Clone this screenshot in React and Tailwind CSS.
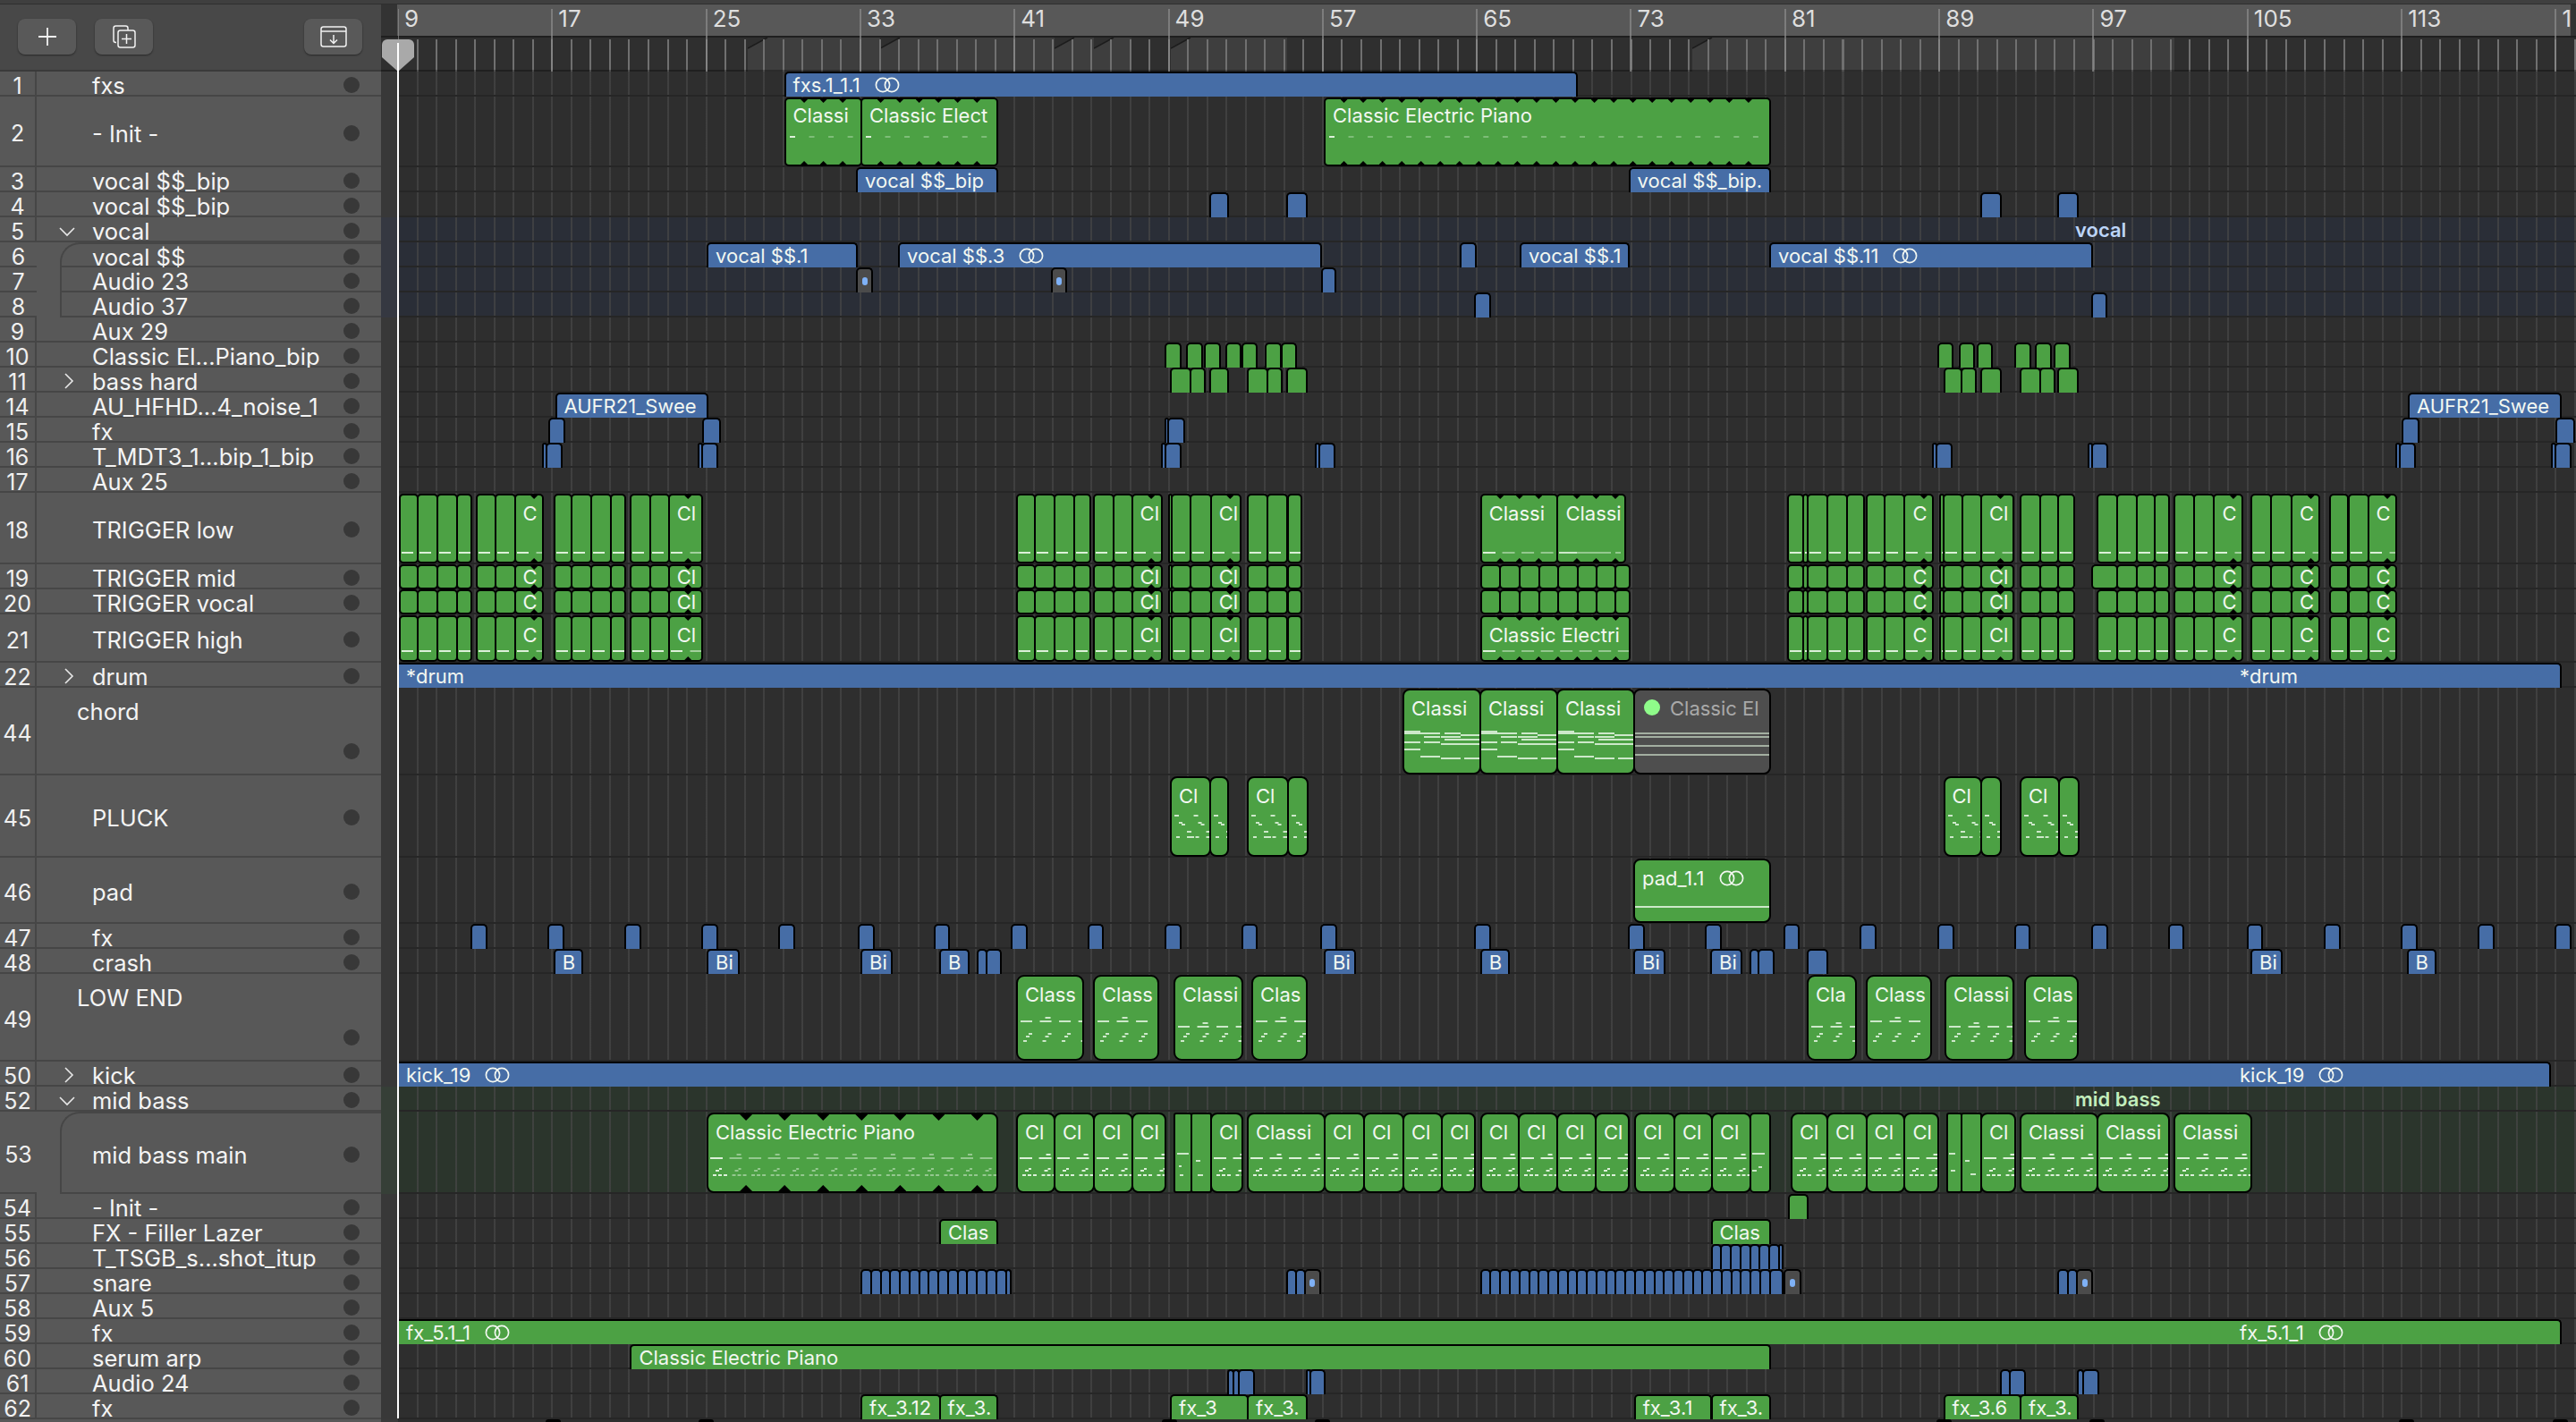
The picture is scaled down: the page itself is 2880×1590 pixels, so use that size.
import React from "react";

const BAR = 21.54;
const X0 = 445;

// clip helpers
const c = (x1, x2, color, extra = {}) => ({ x1, x2, color, ...extra });
const strips = (from, to, step, color = "blue") => {
  const out = [];
  for (let x = from; x + step < to - 4; x += step) out.push(c(x, x + step, color));
  const last = out.length ? out[out.length - 1].x2 : from;
  out.push(c(last, to, color));
  return out;
};
const chain = (xs, color = "green", extra = {}) =>
  xs.slice(0, -1).map((x, i) => c(x, xs[i + 1], color, extra));

// midi note helpers: [x, y, width, opacity]
const dashes = (w, y, len, off = 1, step = BAR, dim = 1) => {
  const out = [];
  let i = 0;
  for (let x = off; x + 2 < w; x += step) {
    out.push([x, y, len, i === 0 ? 1 : dim]);
    i++;
  }
  return out;
};
const chordNotes = [
  [0, 45, 18], [0, 47, 18], [0, 57, 18], [0, 65, 18],
  [18, 47, 22], [22, 51, 18], [22, 57, 18], [18, 73, 22],
  [45, 47, 18], [41, 51, 22], [41, 59, 22], [45, 54, 18], [41, 75, 22],
  [63, 49, 23], [63, 54, 23], [63, 59, 23], [67, 75, 19],
];
const lowNotes = (w, dy = 0) => {
  const out = [];
  for (let x = 3, i = 0; x + 6 < w; x += BAR, i++) {
    out.push([x, 49 + dy, 13]);
    if (i % 2 === 1) out.push([x + 6, 45 + dy, 6]);
    out.push([x + 3, 71, 4], [x + 6, 66, 4], [x + 9, 63, 4]);
  }
  return out;
};
const bassNotes = (w, dim = 1) => {
  const out = [];
  for (let x = 2, i = 0; x + 4 < w; x += BAR, i++) {
    const o = i === 0 ? 1 : dim;
    out.push([x, 48, 14, o], [x + 3, 67, 4, o], [x + 9, 67, 4, o], [x + 15, 67, 4, o], [x + 6, 62, 4, o], [x + 10, 60, 3, o]);
    if (i % 2 === 1) out.push([x + 8, 44, 5, o]);
  }
  return out;
};
const pluckNotes = (w) => {
  const out = [];
  for (let x = 3, i = 0; x + 3 < w; x += BAR, i++) {
    out.push([x, 41, 5], [x + 5, 49, 4], [x + 8, 51, 4], [x + 14, 59, 5], [x + 2, 65, 4], [x + 14, 65, 8]);
  }
  return out;
};

// trigger block, the last entry of a group may be the text of its last clip
const trigGroups = [
  [447, 466.6, 488.7, 510.7, 526.6],
  [533.4, 553.6, 575.6, 607.5, "C"],
  [619.7, 639, 661, 682.8, 698.7],
  [705.4, 727, 747.7, 785, "Cl"],
  [1137, 1156.6, 1178.6, 1200.7, 1219],
  [1223.3, 1244.8, 1265.6, 1298.6, "Cl"],
  [1307, 1309.7, 1331, 1353.8, 1387.4, "Cl"],
  [1395.4, 1417.4, 1439.5, 1455.4],
  [1999, 2016, 2021, 2043, 2065, 2083.5],
  [2087, 2107.4, 2129.4, 2160.7, "C"],
  [2169, 2173, 2193.7, 2215, 2251.3, "Cl"],
  [2259, 2281.3, 2301, 2319],
  [2345, 2367, 2389, 2409, 2425],
  [2431.3, 2453.4, 2475.4, 2506.6, "C"],
  [2517, 2539, 2562, 2593, "C"],
  [2604.6, 2625.5, 2647.5, 2678.7, "C"],
];

const trigger = (y, kind, showLabel = true, firstX = null) => {
  const out = [];
  trigGroups.forEach((g) => {
    const label = typeof g[g.length - 1] === "string" ? g[g.length - 1] : null;
    const xs = g.filter((v) => typeof v === "number");
    if (firstX && xs[0] === 2345) xs[0] = firstX;
    xs.slice(0, -1).forEach((x, i) => {
      const x2 = xs[i + 1];
      const isLast = i === xs.length - 2;
      out.push(
        c(x, x2, "green", {
          kind,
          radius: "rounded-[5px]",
          label: showLabel && label && isLast ? label : null,
          notchEvery: label && isLast ? BAR : null,
          notes: y ? dashes(x2 - x, y, 13, 1, BAR, label && isLast ? 0.6 : 1) : null,
        })
      );
    });
  });
  return out;
};

const midBlock = (kind) =>
  chain([1655.7, 1677, 1699, 1721, 1742, 1764, 1785, 1806, 1821.6], "green", { kind, radius: "rounded-[5px]" });

const small47 = [527, 613, 699, 785, 871, 960, 1044.5, 1131, 1216.6, 1303, 1388.7, 1477, 1649, 1821, 1907, 1994.7, 2080.4, 2167, 2252.5, 2339, 2424.6, 2512.8, 2599, 2685, 2771, 2857];

const grayDot = (x1, x2) => c(x1, x2, "gray", { dot: true });

const tall8 = "rounded-[8px]";
const midB = (x1, x2, label, dim = 1) =>
  c(x1, x2, "green", { kind: "tall", radius: tall8, label, notes: bassNotes(x2 - x1, dim) });

const tracks = [
  { n: "1", name: "fxs", h: "h-7", clips: [c(877.5, 1763, "blue", { label: "fxs.1_1.1", loop: true })] },
  {
    n: "2", name: "- Init -", h: "h-[79px]",
    clips: [
      c(877.5, 963, "green", { kind: "tall", high: true, radius: "rounded-[5px]", label: "Classi", notchEvery: BAR, notes: dashes(85, 41, 6, 4, BAR, 0.35) }),
      c(963, 1115, "green", { kind: "tall", high: true, radius: "rounded-[5px]", label: "Classic Elect", notchEvery: BAR, notes: dashes(152, 41, 6, 4, BAR, 0.35) }),
      c(1481, 1979, "green", { kind: "tall", high: true, radius: "rounded-[5px]", label: "Classic Electric Piano", notchEvery: BAR, notes: dashes(498, 41, 6, 4, BAR, 0.35) }),
    ],
  },
  {
    n: "3", name: "vocal $$_bip", h: "h-7",
    clips: [c(958, 1115, "blue", { label: "vocal $$_bip" }), c(1821.6, 1979, "blue", { label: "vocal $$_bip." })],
  },
  {
    n: "4", name: "vocal $$_bip", h: "h-7",
    clips: [c(1352.5, 1373, "blue"), c(1439, 1461, "blue"), c(2215, 2237, "blue"), c(2301, 2323, "blue")],
  },
  { n: "5", name: "vocal", h: "h-7", chevron: "down", tint: "vocal", tag: "vocal", clips: [] },
  {
    n: "6", name: "vocal $$", h: "h-7", tint: "vocal", inset: "first",
    clips: [
      c(791, 958, "blue", { label: "vocal $$.1" }),
      c(1005, 1477, "blue", { label: "vocal $$.3", loop: true }),
      c(1633, 1649.5, "blue"),
      c(1700, 1821, "blue", { label: "vocal $$.1" }),
      c(1979, 2339, "blue", { label: "vocal $$.11", loop: true }),
    ],
  },
  {
    n: "7", name: "Audio 23", h: "h-7", tint: "vocal", inset: "rest",
    clips: [grayDot(958, 975), grayDot(1175.5, 1191.5), c(1477.5, 1493, "blue")],
  },
  {
    n: "8", name: "Audio 37", h: "h-7", tint: "vocal", inset: "rest",
    clips: [c(1649, 1665.5, "blue"), c(2339, 2355, "blue")],
  },
  { n: "9", name: "Aux 29", h: "h-7", clips: [] },
  {
    n: "10", name: "Classic El...Piano_bip", h: "h-7",
    clips: [
      [1303, 1319.5], [1327, 1344], [1347, 1363.6], [1371, 1387], [1389, 1405], [1415, 1431.5], [1433, 1449],
      [2167, 2183], [2191, 2207], [2211, 2227], [2253, 2270], [2276, 2293], [2297, 2314],
    ].map(([a, b]) => c(a, b, "green")),
  },
  {
    n: "11", name: "bass hard", h: "h-7", chevron: "right",
    clips: [
      [1309, 1331], [1331, 1347], [1352.5, 1373], [1395, 1417], [1417, 1433], [1439, 1461],
      [2173.5, 2193], [2193, 2209], [2215, 2237], [2259, 2281], [2281, 2297], [2301, 2323],
    ].map(([a, b]) => c(a, b, "green")),
  },
  {
    n: "14", name: "AU_HFHD...4_noise_1", h: "h-7",
    clips: [c(621.5, 791, "blue", { label: "AUFR21_Swee" }), c(2693, 2863, "blue", { label: "AUFR21_Swee" })],
  },
  {
    n: "15", name: "fx", h: "h-7",
    clips: [[613.6, 631], [785.7, 805], [1303, 1306], [1306, 1324], [2685.5, 2704], [2857.5, 2878]].map(([a, b]) => c(a, b, "blue")),
  },
  {
    n: "16", name: "T_MDT3_1...bip_1_bip", h: "h-7",
    clips: [607, 781, 1298.6, 1470.7, 2160.7, 2334.6, 2679, 2853].flatMap((x) => [c(x, x + 4, "blue"), c(x + 4, x + 21, "blue")]),
  },
  { n: "17", name: "Aux 25", h: "h-7", clips: [] },
  {
    n: "18", name: "TRIGGER low", h: "h-20",
    clips: [
      ...trigger(63, "tall"),
      c(1655.7, 1741.4, "green", { kind: "tall", radius: "rounded-[5px]", label: "Classi", notchEvery: BAR, notes: dashes(85, 63, 14, 1, BAR, 0.5) }),
      c(1741.4, 1816.7, "green", { kind: "tall", radius: "rounded-[5px]", label: "Classi", notchEvery: BAR, notes: [[1, 63, 20], [21, 63, 38, 0.5], [64, 63, 6, 0.5]] }),
    ],
  },
  { n: "19", name: "TRIGGER mid", h: "h-7", clips: [...trigger(null, "mid", true, 2339), ...midBlock("mid")] },
  { n: "20", name: "TRIGGER vocal", h: "h-7", clips: [...trigger(null, "mid"), ...midBlock("mid")] },
  {
    n: "21", name: "TRIGGER high", h: "h-[54px]",
    clips: [
      ...trigger(37, "tall"),
      c(1655.7, 1821.6, "green", { kind: "tall", radius: "rounded-[5px]", label: "Classic Electri", notchEvery: BAR, notes: dashes(165, 37, 14, 1, BAR, 0.5) }),
    ],
  },
  {
    n: "22", name: "drum", h: "h-7", chevron: "right",
    clips: [c(447, 2863, "blue", { label: "*drum", again: 2505, flat: true })],
  },
  {
    n: "44", name: "chord", h: "h-[98px]", stack: true,
    clips: [
      c(1569, 1655, "green", { kind: "tall", radius: tall8, label: "Classi", notes: chordNotes }),
      c(1655, 1741, "green", { kind: "tall", radius: tall8, label: "Classi", notes: chordNotes }),
      c(1741, 1827, "green", { kind: "tall", radius: tall8, label: "Classi", notes: chordNotes }),
      c(1827, 1979, "darkgray", {
        kind: "tall", radius: tall8, label: "Classic El", muted: true,
        notes: [[0, 47, 150, 0.6], [0, 51, 150, 0.6], [0, 61, 150, 0.6], [0, 71, 150, 0.6]],
      }),
    ],
  },
  {
    n: "45", name: "PLUCK", h: "h-[92px]",
    clips: [
      [1309, 1353, "Cl"], [1353, 1373, null], [1395, 1439.5, "Cl"], [1439.5, 1461.5, null],
      [2173.5, 2215, "Cl"], [2215, 2237, null], [2259, 2301.5, "Cl"], [2301.5, 2323.5, null],
    ].map(([a, b, l]) => c(a, b, "green", { kind: "tall", radius: tall8, label: l, notes: pluckNotes(b - a) })),
  },
  {
    n: "46", name: "pad", h: "h-[74px]",
    clips: [c(1827, 1979, "green", { kind: "tall", radius: tall8, label: "pad_1.1", loop: true, notes: [[0, 51, 150]] })],
  },
  { n: "47", name: "fx", h: "h-7", clips: small47.map((x) => c(x, x + 16.5, "blue")) },
  {
    n: "48", name: "crash", h: "h-7",
    clips: [
      [619.7, 651, "B"], [791, 825.5, "Bi"], [963, 996.7, "Bi"], [1051, 1083, "B"], [1093, 1103, null], [1103, 1119, null],
      [1481, 1515, "Bi"], [1655.7, 1687.5, "B"], [1827, 1861, "Bi"], [1913, 1947, "Bi"], [1957.4, 1966, null], [1966, 1983, null],
      [2021, 2043, null], [2517, 2551, "Bi"], [2691.6, 2723, "B"],
    ].map(([a, b, l]) => c(a, b, "blue", { label: l })),
  },
  {
    n: "49", name: "LOW END", h: "h-[98px]", stack: true,
    clips: [
      [1137, 1211, "Class", 0], [1223, 1295, "Class", 0], [1313, 1389, "Classi", 6], [1400, 1461, "Clas", 0],
      [2021, 2075, "Cla", 6], [2087, 2159, "Class", 0], [2175, 2251, "Classi", 6], [2263.5, 2323, "Clas", 0],
    ].map(([a, b, l, d]) => c(a, b, "green", { kind: "tall", radius: "rounded-[9px]", label: l, notes: lowNotes(b - a, d) })),
  },
  {
    n: "50", name: "kick", h: "h-7", chevron: "right",
    clips: [c(447, 2851, "blue", { label: "kick_19", loop: true, again: 2505, flat: true })],
  },
  { n: "52", name: "mid bass", h: "h-7", chevron: "down", tint: "bass", tag: "mid bass", clips: [] },
  {
    n: "53", name: "mid bass main", h: "h-[92px]", tint: "bass", inset: "first",
    clips: [
      c(791, 1115, "green", { kind: "tall", radius: tall8, label: "Classic Electric Piano", notchEvery: BAR * 2, big: true, notes: bassNotes(324, 0.5) }),
      midB(1137, 1179, "Cl"), midB(1179, 1223, "Cl"), midB(1223, 1265.5, "Cl"), midB(1265.5, 1303, "Cl"),
      c(1313, 1332, "green", { kind: "tall", radius: "rounded-[3px]", notes: [[2, 43, 13], [5, 67, 4], [4, 57, 3]] }),
      c(1332, 1354, "green", { kind: "tall", radius: "rounded-[3px]", notes: [[4, 51, 5], [6, 67, 6]] }),
      midB(1354, 1389, "Cl"), midB(1395, 1481, "Classi"),
      midB(1481, 1525, "Cl"), midB(1525, 1569, "Cl"), midB(1569, 1612, "Cl"), midB(1612, 1649, "Cl"),
      midB(1655.7, 1698, "Cl"), midB(1698, 1741, "Cl"), midB(1741, 1784, "Cl"), midB(1784, 1821, "Cl"),
      midB(1828, 1872, "Cl"), midB(1872, 1914, "Cl"), midB(1914, 1957, "Cl"),
      c(1957, 1979, "green", { kind: "tall", radius: "rounded-[5px]", notes: [[1, 43, 14], [1, 62, 5], [8, 58, 4]] }),
      midB(2003, 2043, "Cl"), midB(2043, 2086.6, "Cl"), midB(2086.6, 2129.4, "Cl"), midB(2129.4, 2167.4, "Cl"),
      c(2177, 2193, "green", { kind: "tall", radius: "rounded-[3px]", notes: [[1, 43, 7], [3, 62, 5]] }),
      c(2193, 2215, "green", { kind: "tall", radius: "rounded-[3px]", notes: [[3, 51, 5], [9, 66, 6]] }),
      midB(2215, 2253, "Cl"), midB(2259, 2345, "Classi"), midB(2345, 2425, "Classi"), midB(2431, 2517, "Classi"),
    ],
  },
  { n: "54", name: "- Init -", h: "h-7", clips: [c(1999.6, 2021, "green")] },
  {
    n: "55", name: "FX - Filler Lazer", h: "h-7",
    clips: [c(1051, 1115, "green", { label: "Clas" }), c(1913.5, 1979, "green", { label: "Clas" })],
  },
  { n: "56", name: "T_TSGB_s...shot_itup", h: "h-7", clips: strips(1913.5, 1993.5, 10.77) },
  {
    n: "57", name: "snare", h: "h-7",
    clips: [
      ...strips(963, 1129.6, 10.77),
      c(1439, 1449, "blue"), c(1449, 1459, "blue"), grayDot(1459, 1475.6),
      ...strips(1655.7, 1993.5, 10.77), grayDot(1994.7, 2013),
      c(2301, 2312, "blue"), c(2312, 2322, "blue"), grayDot(2322, 2339),
    ],
  },
  { n: "58", name: "Aux 5", h: "h-7", clips: [] },
  {
    n: "59", name: "fx", h: "h-7",
    clips: [c(447, 2863, "green", { label: "fx_5.1_1", loop: true, again: 2505, flat: true })],
  },
  { n: "60", name: "serum arp", h: "h-7", clips: [c(705.4, 1979, "green", { label: "Classic Electric Piano" })] },
  {
    n: "61", name: "Audio 24", h: "h-7",
    clips: [[1373, 1379], [1379, 1385], [1385, 1401.5], [1461, 1465], [1465, 1481], [2237, 2247], [2247, 2263.5], [2323, 2329], [2329, 2345.6]].map(([a, b]) => c(a, b, "blue")),
  },
  {
    n: "62", name: "fx", h: "h-7",
    clips: [
      [963, 1050.6, "fx_3.12"], [1050.6, 1115, "fx_3."], [1309, 1395, "fx_3"], [1395, 1461, "fx_3."],
      [1827.7, 1913.5, "fx_3.1"], [1913.5, 1979, "fx_3."], [2173.5, 2259, "fx_3.6"], [2259, 2323, "fx_3."],
    ].map(([a, b, l]) => c(a, b, "green", { label: l })),
  },
];

const markerBands = [
  [836, 984], [984, 1179], [1179, 1223], [1223, 1265], [1309, 1439], [1892, 2431],
];
const rulerBars = [9, 17, 25, 33, 41, 49, 57, 65, 73, 81, 89, 97, 105, 113, 121];
const barX = (b) => (b - 9) * BAR;

function LoopIcon() {
  return (
    <svg width="28" height="18" viewBox="0 0 28 18" fill="none" stroke="currentColor" strokeWidth="1.7" className="shrink-0">
      <circle cx="9" cy="9" r="7.6" />
      <circle cx="19" cy="9" r="7.6" />
    </svg>
  );
}

function ClipLabel({ text, loop, left, tall, high, muted }) {
  let place = "top-0 bottom-0";
  if (tall) place = high ? "top-[7px]" : "top-[9px]";
  return (
    <div
      className={`absolute flex items-center gap-[16px] whitespace-nowrap text-[22px] leading-none ${place} ${muted ? "text-[#a9a9a9]" : "text-[#f2f7f1]"}`}
      style={{ left }}
    >
      <span>{text}</span>
      {loop && <LoopIcon />}
    </div>
  );
}

function Clip({ x1, x2, color, label, loop, again, kind, high, radius, notes, notchEvery, big, dot, flat, muted }) {
  const w = x2 - x1;
  const fill = {
    blue: "bg-[#466da6]",
    green: "bg-[#4ca144]",
    gray: "bg-[#4b4b4b]",
    darkgray: "bg-[#4e4e4e]",
  }[color];
  let shape = "top-0 bottom-0 border-x-2 border-t-2 rounded-t-[5px]";
  if (kind === "tall") shape = `top-[1px] bottom-[1px] border-2 ${radius}`;
  if (kind === "mid") shape = "top-0 bottom-0 border-2 rounded-[5px]";
  if (flat) shape = "top-0 bottom-0 border-t-2 border-r-2 rounded-tr-[5px]";

  const notches = [];
  if (notchEvery) for (let p = notchEvery; p < w - 6; p += notchEvery) notches.push(p);
  const notchSize = big ? 14 : 8;

  // neighbours share their black edge, so each clip reaches 1px past its bounds
  return (
    <div className={`absolute overflow-hidden border-black ${fill} ${shape}`} style={{ left: x1 - X0 - 1, width: w + 2 }}>
      {notes && (
        <svg className="absolute inset-0 h-full w-full">
          {notes.map((n, i) => (
            <rect key={i} x={n[0]} y={n[1]} width={n[2]} height="2" fill="#dcf0d9" opacity={n[3] ?? 0.9} />
          ))}
        </svg>
      )}
      {notches.map((p) => (
        <React.Fragment key={p}>
          <span
            className={`absolute top-0 bg-black [clip-path:polygon(0_0,100%_0,50%_100%)] ${big ? "h-[7px] w-[14px]" : "h-[4px] w-[8px]"}`}
            style={{ left: p - notchSize / 2 - 1 }}
          />
          <span
            className={`absolute bottom-0 bg-black [clip-path:polygon(50%_0,100%_100%,0_100%)] ${big ? "h-[7px] w-[14px]" : "h-[4px] w-[8px]"}`}
            style={{ left: p - notchSize / 2 - 1 }}
          />
        </React.Fragment>
      ))}
      {muted && <span className="absolute left-[10px] top-[10px] h-[18px] w-[18px] rounded-full bg-[#8ffb8a]" />}
      {label && <ClipLabel text={label} loop={loop} left={muted ? 39 : 8} tall={kind === "tall"} high={high} muted={muted} />}
      {again && <ClipLabel text={label} loop={loop} left={again - x1} tall={false} />}
      {dot && (
        <div className="absolute inset-0 flex items-center justify-center">
          <span className="h-[9px] w-[6px] rounded-full bg-[#7fb1f6]" />
        </div>
      )}
    </div>
  );
}

function Chevron({ dir }) {
  if (dir === "down") {
    return (
      <svg width="20" height="12" viewBox="0 0 20 12" fill="none" stroke="#e8e8e8" strokeWidth="1.6" className="absolute left-[65px] top-[10px]">
        <path d="M2 2l8 8 8-8" />
      </svg>
    );
  }
  return (
    <svg width="12" height="20" viewBox="0 0 12 20" fill="none" stroke="#e8e8e8" strokeWidth="1.6" className="absolute left-[71px] top-[5px]">
      <path d="M2 2l8 8-8 8" />
    </svg>
  );
}

function TrackHead({ t }) {
  const nameRow = (
    <>
      <div className={`min-w-0 flex-1 whitespace-nowrap text-[25.5px] leading-none text-[#f4f4f4] ${t.stack ? "mt-[14px] self-start pl-[45px]" : t.inset ? "pl-[34px] pt-[6px]" : "pl-[62px] pt-[6px]"}`}>
        {t.name}
      </div>
      <div className={`mr-[24px] h-[18px] w-[18px] shrink-0 rounded-full bg-[#383838] ${t.stack ? "mb-[16px] self-end" : "mt-[4px]"}`} />
    </>
  );
  return (
    <div className="relative flex w-[426px] shrink-0 bg-[#585858]">
      <div className={`flex w-[41px] shrink-0 items-center justify-center border-b-2 border-[#464646] pt-[6px] text-[25px] leading-none text-[#f0f0f0] ${t.inset ? "" : "border-r-2"}`}>
        {t.n}
      </div>
      {t.inset ? (
        <div
          className={`ml-[26px] flex min-w-0 flex-1 items-center border-b-2 border-l-2 border-[#464646] ${t.inset === "first" ? "rounded-tl-[22px] border-t-2" : ""}`}
        >
          {nameRow}
        </div>
      ) : (
        <div className="flex min-w-0 flex-1 items-center border-b-2 border-[#464646]">{nameRow}</div>
      )}
      {t.chevron && <Chevron dir={t.chevron} />}
    </div>
  );
}

function TrackRow({ t }) {
  let laneBg = "bg-[#2e2e2e]";
  if (t.tint === "vocal") laneBg = "bg-[#2a2e37]";
  if (t.tint === "bass") laneBg = "bg-[#2b352c]";
  return (
    <div className={`flex ${t.h}`}>
      <TrackHead t={t} />
      <div className={`relative w-[19px] shrink-0 ${laneBg}`}>
        <div className="absolute inset-0 bg-white/5" />
      </div>
      <div className={`relative min-w-0 flex-1 ${laneBg}`}>
        <div className="absolute inset-0 bg-[repeating-linear-gradient(90deg,#474747_0,#474747_1px,transparent_1px,transparent_20.54px,#474747_20.54px,#474747_21.54px)] opacity-70" />
        <div className="absolute inset-x-0 bottom-0 h-[2px] bg-[#262626]" />
        {t.tag && (
          <div
            className={`absolute inset-y-0 flex items-center text-[22px] leading-none font-semibold ${t.tint === "vocal" ? "text-[#bcd4f8]" : "text-[#c2eebc]"}`}
            style={{ left: 2320 - X0 }}
          >
            {t.tag}
          </div>
        )}
        {t.clips.map((clip, i) => (
          <Clip key={i} {...clip} />
        ))}
      </div>
    </div>
  );
}

function HeaderButton({ children }) {
  return (
    <button className="flex h-[40px] w-[65px] items-center justify-center rounded-[8px] bg-[#595959] shadow-[0_1px_2px_rgba(0,0,0,0.45)]">
      {children}
    </button>
  );
}

function Header() {
  return (
    <div className="flex h-[80px] shrink-0">
      <div className="flex w-[426px] shrink-0 flex-col bg-[#484848] shadow-[inset_0_-2px_0_#3a3a3a]">
        <div className="h-[5px] shrink-0 border-b border-[#2f2f2f] bg-[#3f3f3f]" />
        <div className="flex flex-1 items-center pb-[4px] pl-[20px] pr-[21px]">
          <HeaderButton>
            <svg width="22" height="22" viewBox="0 0 22 22" stroke="#f1f1f1" strokeWidth="1.8">
              <path d="M11 1v20M1 11h20" />
            </svg>
          </HeaderButton>
          <div className="w-[21px]" />
          <HeaderButton>
            <svg width="28" height="28" viewBox="0 0 28 28" fill="none" stroke="#f1f1f1" strokeWidth="1.5">
              <path d="M5 20.5h-.5A2.5 2.5 0 0 1 2 18V4.5A2.5 2.5 0 0 1 4.5 2h11A2.5 2.5 0 0 1 18 4.5V7" />
              <rect x="7" y="7" width="19" height="19" rx="2.5" />
              <path d="M16.500 11v11M11 16.500h11" />
            </svg>
          </HeaderButton>
          <div className="flex-1" />
          <HeaderButton>
            <svg width="32" height="26" viewBox="0 0 32 26" fill="none" stroke="#f1f1f1" strokeWidth="1.5">
              <rect x="2" y="2" width="28" height="22" rx="2.5" />
              <path d="M2 7h28M16 11v9M12 16.500l4 4 4-4" />
            </svg>
          </HeaderButton>
        </div>
      </div>
      <div className="relative min-w-0 flex-1 bg-[#2e2e2e]">
        <div className="h-[5px] border-b border-[#2f2f2f] bg-[#3f3f3f]" />
        <div className="flex h-[37px] border-b-2 border-[#1f1f1f] bg-[#333333]">
          <div className="w-[18px] shrink-0" />
          <div className="relative w-[2430px] overflow-hidden bg-[#585858]">
            {rulerBars.map((b) => (
              <div key={b} className="absolute inset-y-0 text-[26px] leading-[31px] text-[#dedede]" style={{ left: barX(b) + 8 }}>
                {b}
              </div>
            ))}
          </div>
        </div>
        <div className="relative h-[38px] overflow-hidden bg-[#2f2f2f]">
          <div className="absolute inset-y-0 left-[19px] right-0">
            {markerBands.map(([a, b]) => (
              <div key={a} className="absolute inset-y-0" style={{ left: a - X0, width: b - a }}>
                <div className="absolute inset-0 bg-[#3e3e3e] [clip-path:polygon(22px_0,100%_0,100%_100%,0_100%,0_12px)]" />
                <svg width="24" height="14" className="absolute left-0 top-0" stroke="#1c1c1c" strokeWidth="1.5">
                  <path d="M0 12L22 0" />
                </svg>
              </div>
            ))}
            <div className="absolute inset-x-0 bottom-0 top-[2px] bg-[repeating-linear-gradient(90deg,#707070_0,#707070_1px,transparent_1px,transparent_20.54px,#707070_20.54px,#707070_21.54px)]" />
          </div>
          <div className="absolute inset-x-0 bottom-0 h-[2px] bg-black/30" />
        </div>
        <div className="absolute inset-y-0 left-[19px] right-0 top-[10px] bg-[repeating-linear-gradient(90deg,#8c8c8c_0,#8c8c8c_1px,transparent_1px,transparent_171.3px,#8c8c8c_171.3px,#8c8c8c_172.3px)] opacity-70" />
      </div>
    </div>
  );
}

export default function App() {
  return (
    <div className="relative h-[1590px] w-[2880px] overflow-hidden bg-[#2e2e2e] [font-family:Inter,'Noto_Sans',sans-serif]">
      <Header />
      {tracks.map((t) => (
        <TrackRow key={t.n} t={t} />
      ))}
      <div className="flex h-[3px]">
        <div className="w-[426px] shrink-0 bg-[#585858]" />
        <div className="w-[19px] shrink-0 bg-[#3a3a3a]" />
        <div className="relative min-w-0 flex-1">
          {[610, 781, 1299, 1470, 2165, 2336, 2682, 2854].map((x) => (
            <div key={x} className="absolute inset-y-0 w-[17px] rounded-t-[4px] bg-black" style={{ left: x - X0 }} />
          ))}
        </div>
      </div>

      {/* playhead */}
      <div className="absolute left-[444px] top-[48px] h-[1538px] w-[2px] bg-white" />
      <svg width="36" height="36" viewBox="0 0 36 36" className="absolute left-[427px] top-[44px]">
        <path d="M6 0h24a6 6 0 0 1 6 6v14L18 36 0 20V6a6 6 0 0 1 6-6z" fill="#a9a9a9" />
        <path d="M17 4h2v32h-2z" fill="#ffffff" />
      </svg>
    </div>
  );
}
